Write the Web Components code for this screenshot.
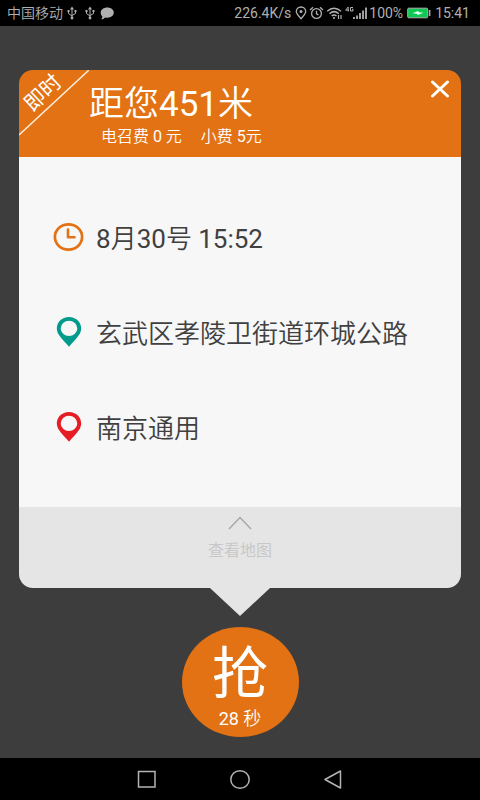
<!DOCTYPE html>
<html lang="zh-CN">
<head>
<meta charset="utf-8">
<meta name="viewport" content="width=device-width, initial-scale=1">
<title>抢单</title>
<style>
html, body { margin: 0; }
body {
  background: #3d3d3d;
  font-family: Roboto, "Noto Sans CJK SC", sans-serif;
}
</style>
</head>
<body>
<order-screen></order-screen>

<script>
function define(name, html) {
  const template = document.createElement('template');
  template.innerHTML = html;
  customElements.define(name, class extends HTMLElement {
    constructor() {
      super();
      this.attachShadow({ mode: 'open' }).append(template.content.cloneNode(true));
    }
  });
}

const usb = `<svg width="10" height="14" viewBox="0 0 10 14" fill="none" stroke="#b0b0b0" stroke-width="1" aria-hidden="true">
  <path d="M5 2v10M1.500 5v2.500L5 10M8.500 5v2.500L5 9.500"/><path d="M5 0.500L3 3.500h4z" fill="#b0b0b0" stroke="none"/>
  <path d="M0.500 4h2v2h-2zM7.500 4h2v2h-2z" fill="#b0b0b0" stroke="none"/><circle cx="5" cy="12" r="1.400" fill="#b0b0b0" stroke="none"/></svg>`;

define('status-bar', `
<style>
  :host { display: flex; justify-content: space-between; align-items: center; height: 26px; padding: 0 10px 0 7px; background: #000; color: #b0b0b0; font-size: 14px; line-height: 20px; white-space: nowrap; }
  div { display: flex; align-items: center; }
  .left { gap: 4px; }
  .usb { display: flex; gap: 8px; }
  .carrier { font-weight: 350; }
  .right { gap: 2px; }
  .speed { margin-right: 2px; }
  .battery { margin: 0 2px; }
  svg { display: block; flex: none; }
</style>
<div class="left">
  <span class="carrier">中国移动</span>
  <span class="usb">${usb}${usb}</span>
  <svg width="16" height="13" viewBox="-1 0 16 13" fill="#b0b0b0" aria-hidden="true"><path d="M7.300 0.500C11 0.500 13.800 2.700 13.800 5.600S11 10.700 7.300 10.700C6.500 10.700 5.700 10.600 5 10.400C4 11.600 2.800 12.200 1.200 12.400C2 11.500 2.300 10.500 2.300 9.300C1.200 8.400 0.700 7.100 0.700 5.600C0.700 2.700 3.600 0.500 7.300 0.500z"/></svg>
</div>
<div class="right">
  <span class="speed">226.4K/s</span>
  <svg width="12" height="14" viewBox="0 0 12 14" fill="none" stroke="#b0b0b0" stroke-width="1.300" aria-hidden="true"><path d="M6 12.700C3.500 9.900 1.300 7.900 1.300 5.500a4.700 4.500 0 0 1 9.400 0C10.700 7.900 8.500 9.900 6 12.700z"/><circle cx="6" cy="5.500" r="1.500" fill="#b0b0b0" stroke="none"/></svg>
  <svg width="15" height="14" viewBox="0 0 15 14" fill="none" stroke="#b0b0b0" stroke-width="1.300" aria-hidden="true"><circle cx="7.500" cy="7.500" r="4.900"/><path d="M7.500 4.800v3l2 1.200M1 4l3-2.700M14 4l-3-2.700"/></svg>
  <svg width="17" height="14" viewBox="0 0 17 14" fill="none" stroke="#b0b0b0" stroke-width="1.500" aria-hidden="true"><path d="M1.200 5.200Q8 -0.800 15 5.200M3.500 7.700Q8 3.600 12.800 7.700M5.700 10Q8 8 10.500 10"/><circle cx="8" cy="12" r="1.100" fill="#b0b0b0" stroke="none"/><path d="M12.500 9v4M15 9v4" stroke-width="1.200"/></svg>
  <svg width="22" height="14" viewBox="0 0 22 14" fill="none" stroke="#b0b0b0" aria-hidden="true"><path d="M3.200 5.500V1L0.700 4.200h3.300M8 1.500H5.500v3.500H8V3.200H7" stroke-width="1"/><path d="M9 13v-2M12 13V9.500M15 13V7M18 13V4.500M21 13V1.500" stroke-width="1.800"/></svg>
  <span>100%</span>
  <svg class="battery" width="24" height="12" viewBox="0 0 24 12" aria-hidden="true"><rect x="0.700" y="1.200" width="20" height="9.600" rx="1" fill="#0bc952" stroke="#b0b0b0"/><path d="M22.600 3v6" stroke="#b0b0b0" stroke-width="1.600"/><path d="M5.500 6.300L11 4l1 1.300L16.500 5.700L11 8L9.700 6.700z" fill="#e4ffe9"/></svg>
  <span>15:41</span>
</div>`);

define('order-header', `
<style>
  :host { display: block; position: relative; height: 87px; padding: 15px 70px 0; box-sizing: border-box; background: #e27213; color: #fff; border-radius: 14px 14px 0 0; overflow: hidden; }
  h1 { margin: 0; font-size: 35px; line-height: 40px; font-weight: 350; }
  b { font-weight: 400; }
  p { display: flex; gap: 19px; margin: 0; padding: 1px 0 0 12px; font-size: 16px; line-height: 22px; font-weight: 350; }
  .ribbon { position: absolute; left: 0; top: 0; }
  .tag { position: absolute; left: 0; top: 11px; width: 48px; font-size: 21px; line-height: 24px; text-align: center; transform: rotate(-43deg); }
  button { position: absolute; right: 8px; top: 6px; width: 26px; height: 26px; padding: 0; border: 0; background: none; display: grid; place-items: center; }
</style>
<svg class="ribbon" width="70" height="66" viewBox="0 0 70 66" aria-hidden="true"><path d="M0 65L70 0" stroke="#ffeedd" stroke-width="1.500"/></svg>
<span class="tag">即时</span>
<h1>距您<b>451</b>米</h1>
<p><span>电召费 <b>0</b> 元</span><span>小费 <b>5</b>元</span></p>
<button type="button" aria-label="关闭"><svg width="20" height="18" viewBox="0 0 20 18" aria-hidden="true"><path d="M2.500 2L17.500 16M17.500 2L2.500 16" stroke="#fff" stroke-width="3" stroke-linecap="round"/></svg></button>`);

define('info-row', `
<style>
  :host { display: flex; align-items: center; gap: 11px; height: 36px; color: #404040; font-size: 26px; line-height: 32px; font-weight: 350; }
  .icon { flex: none; width: 32px; display: grid; place-items: center; }
  .text { padding-top: 4px; }
  ::slotted(b) { font-weight: 400; }
</style>
<span class="icon"><slot name="icon"></slot></span><span class="text"><slot></slot></span>`);

define('map-pin', `
<style>:host { display: block; } svg { display: block; }</style>
<svg width="26" height="32" viewBox="0 0 26 32" fill="currentColor" aria-hidden="true"><path fill-rule="evenodd" d="M13 1C20 1 25.200 6 25.200 12.500C25.200 19 18.500 24 13 30.800C7.500 24 0.800 19 0.800 12.500C0.800 6 6 1 13 1zM13 4.700a8.300 7.700 0 1 0 0 15.400a8.300 7.700 0 1 0 0 -15.400z"/></svg>`);

define('map-toggle', `
<style>
  :host { display: block; }
  button { display: flex; flex-direction: column; align-items: center; gap: 9px; width: 100%; height: 81px; padding: 9px 0 0; border: 0; border-radius: 0 0 14px 14px; background: #e5e5e5; color: #c8c8c8; font: inherit; font-size: 16px; line-height: 24px; }
  .tip { display: block; margin: -1px auto 0; }
</style>
<button type="button"><svg width="24" height="14" viewBox="0 0 24 14" fill="none" stroke="#a6a6a6" stroke-width="1.400" aria-hidden="true"><path d="M1 13L12 1.500L23 13"/></svg><span>查看地图</span></button>
<svg class="tip" width="60" height="29" viewBox="0 0 60 29" fill="#e5e5e5" aria-hidden="true"><path d="M0 0H60V1L30 29L0 1z"/></svg>`);

define('order-card', `
<style>
  :host { display: block; margin: 0 19px; }
  .rows { display: flex; flex-direction: column; gap: 59px; padding: 62px 34px; background: #f7f7f7; }
  .green { color: #019b8b; }
  .red { color: #e71d26; }
</style>
<order-header></order-header>
<div class="rows">
  <info-row><svg slot="icon" width="32" height="30" viewBox="0 0 32 30" fill="none" stroke="#e27213" aria-hidden="true"><ellipse cx="15.500" cy="15" rx="13.600" ry="12.600" stroke-width="2.700"/><path d="M15 7.500V15.200H21.500" stroke-width="2.600" stroke-linecap="round" stroke-linejoin="round"/></svg><b>8</b>月<b>30</b>号 <b>15:52</b></info-row>
  <info-row><map-pin slot="icon" class="green"></map-pin>玄武区孝陵卫街道环城公路</info-row>
  <info-row><map-pin slot="icon" class="red"></map-pin>南京通用</info-row>
</div>
<map-toggle></map-toggle>`);

define('grab-button', `
<style>
  :host { display: block; }
  button { display: flex; flex-direction: column; align-items: center; width: 117px; height: 110px; margin: 0 auto; padding: 15px 0 0; border: 0; border-radius: 50%; background: #e27213; color: #fff; font: inherit; }
  .main { font-size: 56px; line-height: 64px; font-weight: 400; }
  .time { font-size: 18px; line-height: 26px; font-weight: 350; }
  b { font-weight: 400; }
</style>
<button type="button"><span class="main">抢</span><span class="time"><b>28</b> 秒</span></button>`);

define('nav-bar', `
<style>
  :host { display: flex; justify-content: center; align-items: center; gap: 69px; height: 42px; background: #000; }
  button { padding: 0; border: 0; background: none; width: 24px; height: 24px; }
  svg { display: block; fill: none; stroke: #b4b4b4; stroke-width: 1.500; }
</style>
<button type="button" aria-label="最近任务"><svg width="24" height="24"><rect x="3.500" y="4.500" width="16.500" height="15.500"/></svg></button>
<button type="button" aria-label="主页"><svg width="24" height="24"><ellipse cx="12" cy="12.500" rx="9.200" ry="8.800"/></svg></button>
<button type="button" aria-label="返回"><svg width="24" height="24"><path d="M4 12.500L19.500 4V21z" stroke-linejoin="round"/></svg></button>`);

define('order-screen', `
<style>
  :host { display: flex; flex-direction: column; min-height: 100vh; }
  main { flex: 1; display: flex; flex-direction: column; gap: 11px; padding: 44px 0 20px; }
</style>
<status-bar></status-bar>
<main><order-card></order-card><grab-button></grab-button></main>
<nav-bar></nav-bar>`);
</script>
</body>
</html>
